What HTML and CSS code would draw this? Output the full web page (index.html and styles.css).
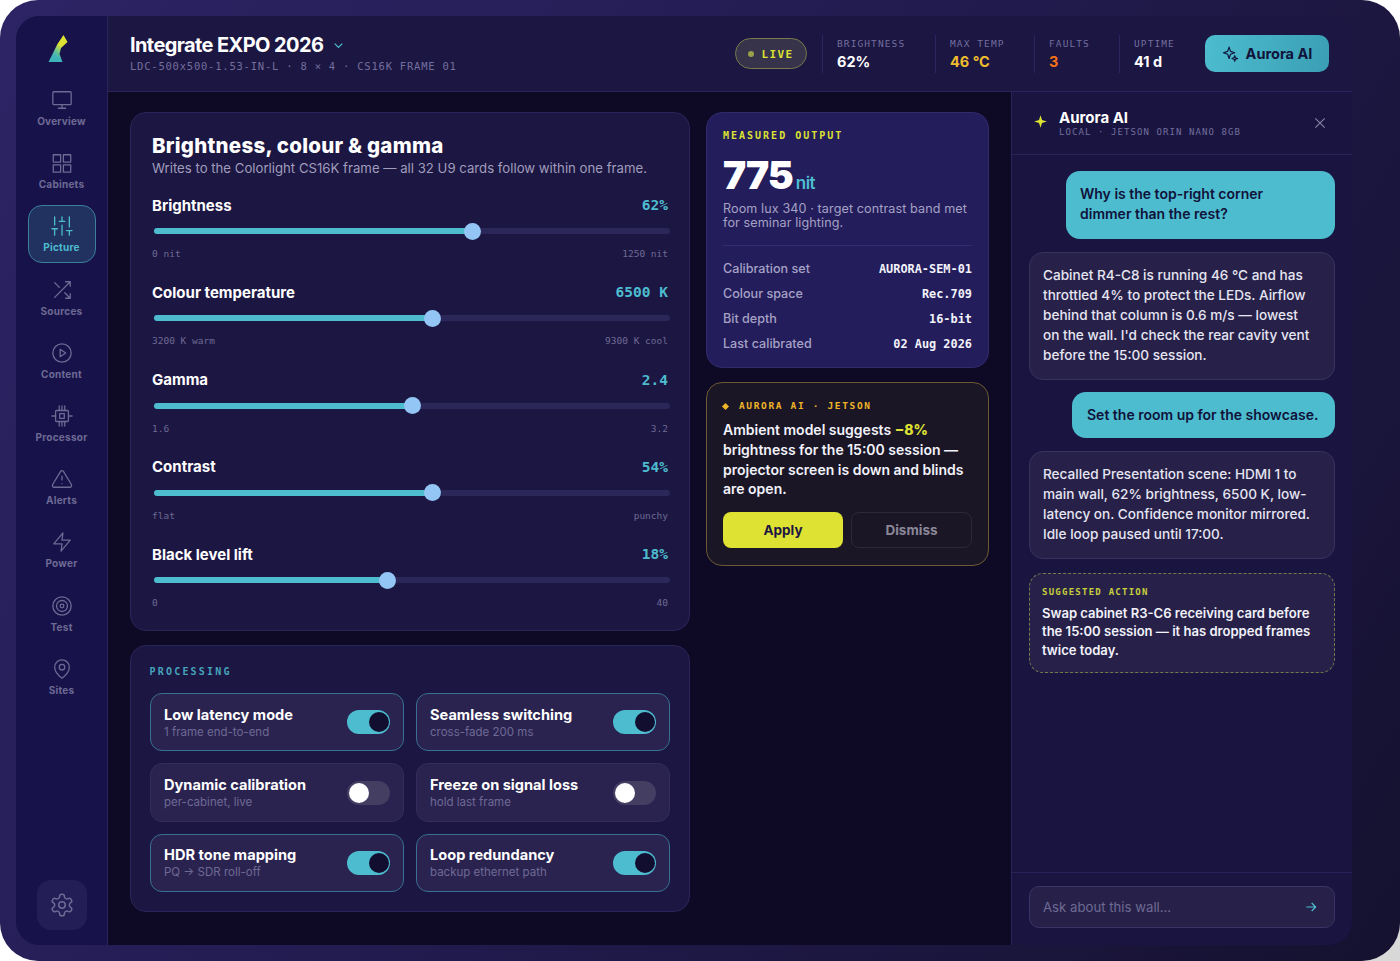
FILE: index.html
```html
<!DOCTYPE html>
<html lang="en">
<head>
    <meta charset="UTF-8">
    <title>Integrate EXPO 2026</title>
    <link rel="stylesheet" href="styles.css">
</head>
<body>
<div class="device">
<div class="app">
    <nav class="sidebar">
        <svg class="logo" viewBox="0 0 24 30" width="24" height="30">
            <defs>
                <linearGradient id="logoFill" x1="0.7" y1="0" x2="0.3" y2="1">
                    <stop offset="0.35" stop-color="#dde233"/>
                    <stop offset="0.6" stop-color="#6fc48a"/>
                    <stop offset="0.8" stop-color="#3fb4b8"/>
                </linearGradient>
            </defs>
            <polygon points="17.5,2 21.5,9 15,15 13.5,21 16.5,29 2.5,29 7.5,19 11.5,11" fill="url(#logoFill)"/>
        </svg>
        <div class="nav-list">
            <a class="nav-item">
                <svg class="ico" viewBox="0 0 24 24"><rect x="2" y="3" width="20" height="14" rx="1"/><path d="M8 21h8M12 17v4"/></svg>
                <span>Overview</span>
            </a>
            <a class="nav-item">
                <svg class="ico" viewBox="0 0 24 24"><rect x="2.5" y="3" width="8" height="8"/><rect x="13.5" y="3" width="8" height="8"/><rect x="2.5" y="14" width="8" height="8"/><rect x="13.5" y="14" width="8" height="8"/></svg>
                <span>Cabinets</span>
            </a>
            <a class="nav-item active">
                <svg class="ico" viewBox="0 0 24 24"><path d="M4 22v-7M4 11V2M12 22v-11M12 7V2M20 22v-5M20 13V2M1 15h6M9 7h6M17 17h6"/></svg>
                <span>Picture</span>
            </a>
            <a class="nav-item">
                <svg class="ico" viewBox="0 0 24 24"><path d="M16 3h5v5M4 20 21 3M21 16v5h-5M15 15l6 6M4 4l5 5"/></svg>
                <span>Sources</span>
            </a>
            <a class="nav-item">
                <svg class="ico" viewBox="0 0 24 24"><circle cx="12" cy="12" r="10"/><polygon points="10,8 16,12 10,16"/></svg>
                <span>Content</span>
            </a>
            <a class="nav-item">
                <svg class="ico" viewBox="0 0 24 24"><rect x="5" y="6" width="14" height="12" rx="1"/><rect x="9.5" y="9.5" width="5" height="5"/><path d="M9 1v5M12 1v5M15 1v5M9 18v5M12 18v5M15 18v5M1 12h4M19 12h4"/></svg>
                <span>Processor</span>
            </a>
            <a class="nav-item">
                <svg class="ico" viewBox="0 0 24 24"><path d="M10.3 3.9 1.8 18a2 2 0 0 0 1.7 3h17a2 2 0 0 0 1.7-3L13.7 3.9a2 2 0 0 0-3.4 0z"/><path d="M12 9v4M12 17h.01"/></svg>
                <span>Alerts</span>
            </a>
            <a class="nav-item">
                <svg class="ico" viewBox="0 0 24 24"><path d="M13 2 3 14h9l-1 8 10-12h-9l1-8z"/></svg>
                <span>Power</span>
            </a>
            <a class="nav-item">
                <svg class="ico" viewBox="0 0 24 24"><circle cx="12" cy="12" r="10"/><circle cx="12" cy="12" r="6"/><circle cx="12" cy="12" r="2"/></svg>
                <span>Test</span>
            </a>
            <a class="nav-item">
                <svg class="ico" viewBox="0 0 24 24"><path d="M20 10c0 6-8 12-8 12s-8-6-8-12a8 8 0 0 1 16 0z"/><circle cx="12" cy="10" r="3"/></svg>
                <span>Sites</span>
            </a>
        </div>
        <button class="settings">
            <svg class="ico" viewBox="0 0 24 24"><path d="M12.2 2h-.4a2 2 0 0 0-2 2v.2a2 2 0 0 1-1 1.7l-.4.3a2 2 0 0 1-2 0l-.2-.1a2 2 0 0 0-2.7.7l-.2.4a2 2 0 0 0 .7 2.7l.2.1a2 2 0 0 1 1 1.7v.5a2 2 0 0 1-1 1.8l-.2.1a2 2 0 0 0-.7 2.7l.2.4a2 2 0 0 0 2.7.7l.2-.1a2 2 0 0 1 2 0l.4.3a2 2 0 0 1 1 1.7v.2a2 2 0 0 0 2 2h.4a2 2 0 0 0 2-2v-.2a2 2 0 0 1 1-1.7l.4-.3a2 2 0 0 1 2 0l.2.1a2 2 0 0 0 2.7-.7l.2-.4a2 2 0 0 0-.7-2.7l-.2-.1a2 2 0 0 1-1-1.8v-.5a2 2 0 0 1 1-1.7l.2-.1a2 2 0 0 0 .7-2.7l-.2-.4a2 2 0 0 0-2.7-.7l-.2.1a2 2 0 0 1-2 0l-.4-.3a2 2 0 0 1-1-1.7V4a2 2 0 0 0-2-2z"/><circle cx="12" cy="12" r="3"/></svg>
        </button>
    </nav>

    <div class="right">
        <header class="topbar">
            <div class="wall">
                <h1>Integrate EXPO 2026 <svg class="chev" viewBox="0 0 24 24"><path d="m6 9 6 6 6-6"/></svg></h1>
                <p class="mono">LDC-500x500-1.53-IN-L · 8 × 4 · CS16K FRAME 01</p>
            </div>
            <div class="live"><i></i>LIVE</div>
            <div class="stat stat-b"><label>BRIGHTNESS</label><b>62%</b></div>
            <div class="stat stat-t"><label>MAX TEMP</label><b class="amber">46 °C</b></div>
            <div class="stat stat-f"><label>FAULTS</label><b class="orange">3</b></div>
            <div class="stat stat-u"><label>UPTIME</label><b>41 d</b></div>
            <button class="ai-btn">
                <svg viewBox="0 0 24 24"><path d="M10 3l2 6 6 2-6 2-2 6-2-6-6-2 6-2z"/><path d="M18 15l1 3 3 1-3 1-1 3-1-3-3-1 3-1z"/></svg>
                Aurora AI
            </button>
        </header>

        <div class="body">
            <main class="main">
                <div class="col-left">
                    <section class="card">
                        <h2>Brightness, colour &amp; gamma</h2>
                        <p class="lead">Writes to the Colorlight CS16K frame — all 32 U9 cards follow within one frame.</p>

                        <div class="ctl">
                            <div class="ctl-head"><span>Brightness</span><em>62%</em></div>
                            <div class="track"><div class="fill" style="--v:.62"></div></div>
                            <div class="ctl-foot"><span>0 nit</span><span>1250 nit</span></div>
                        </div>
                        <div class="ctl">
                            <div class="ctl-head"><span>Colour temperature</span><em>6500 K</em></div>
                            <div class="track"><div class="fill" style="--v:.54"></div></div>
                            <div class="ctl-foot"><span>3200 K warm</span><span>9300 K cool</span></div>
                        </div>
                        <div class="ctl">
                            <div class="ctl-head"><span>Gamma</span><em>2.4</em></div>
                            <div class="track"><div class="fill" style="--v:.5"></div></div>
                            <div class="ctl-foot"><span>1.6</span><span>3.2</span></div>
                        </div>
                        <div class="ctl">
                            <div class="ctl-head"><span>Contrast</span><em>54%</em></div>
                            <div class="track"><div class="fill" style="--v:.54"></div></div>
                            <div class="ctl-foot"><span>flat</span><span>punchy</span></div>
                        </div>
                        <div class="ctl">
                            <div class="ctl-head"><span>Black level lift</span><em>18%</em></div>
                            <div class="track"><div class="fill" style="--v:.45"></div></div>
                            <div class="ctl-foot"><span>0</span><span>40</span></div>
                        </div>
                    </section>

                    <section class="card processing">
                        <h3>PROCESSING</h3>
                        <div class="toggles">
                            <div class="tog on"><div><b>Low latency mode</b><small>1 frame end-to-end</small></div><span class="sw"></span></div>
                            <div class="tog on"><div><b>Seamless switching</b><small>cross-fade 200 ms</small></div><span class="sw"></span></div>
                            <div class="tog"><div><b>Dynamic calibration</b><small>per-cabinet, live</small></div><span class="sw"></span></div>
                            <div class="tog"><div><b>Freeze on signal loss</b><small>hold last frame</small></div><span class="sw"></span></div>
                            <div class="tog on"><div><b>HDR tone mapping</b><small>PQ → SDR roll-off</small></div><span class="sw"></span></div>
                            <div class="tog on"><div><b>Loop redundancy</b><small>backup ethernet path</small></div><span class="sw"></span></div>
                        </div>
                    </section>
                </div>

                <div class="col-mid">
                    <section class="output">
                        <h3>MEASURED OUTPUT</h3>
                        <div class="big">775<span>nit</span></div>
                        <p>Room lux 340 · target contrast band met<br>for seminar lighting.</p>
                        <dl>
                            <div><dt>Calibration set</dt><dd>AURORA-SEM-01</dd></div>
                            <div><dt>Colour space</dt><dd>Rec.709</dd></div>
                            <div><dt>Bit depth</dt><dd>16-bit</dd></div>
                            <div><dt>Last calibrated</dt><dd>02 Aug 2026</dd></div>
                        </dl>
                    </section>

                    <section class="hint">
                        <h3><i></i>AURORA AI · JETSON</h3>
                        <p>Ambient model suggests <b>−8%</b><br>brightness for the 15:00 session —<br>projector screen is down and blinds<br>are open.</p>
                        <div class="hint-btns">
                            <button class="apply">Apply</button>
                            <button class="dismiss">Dismiss</button>
                        </div>
                    </section>
                </div>
            </main>

            <aside class="panel">
                <div class="panel-head">
                    <svg class="spark" viewBox="0 0 24 24"><path d="M12 2l2.4 7.6L22 12l-7.6 2.4L12 22l-2.4-7.6L2 12l7.6-2.4z"/></svg>
                    <div class="panel-title"><b>Aurora AI</b><span>LOCAL · JETSON ORIN NANO 8GB</span></div>
                    <svg class="close" viewBox="0 0 24 24"><path d="M5 5l14 14M19 5 5 19"/></svg>
                </div>
                <div class="chat">
                    <div class="msg user u1">Why is the top-right corner<br>dimmer than the rest?</div>
                    <div class="msg bot">Cabinet R4-C8 is running 46 °C and has<br>throttled 4% to protect the LEDs. Airflow<br>behind that column is 0.6 m/s — lowest<br>on the wall. I'd check the rear cavity vent<br>before the 15:00 session.</div>
                    <div class="msg user u2">Set the room up for the showcase.</div>
                    <div class="msg bot">Recalled Presentation scene: HDMI 1 to<br>main wall, 62% brightness, 6500 K, low-<br>latency on. Confidence monitor mirrored.<br>Idle loop paused until 17:00.</div>
                    <div class="suggest">
                        <h4>SUGGESTED ACTION</h4>
                        <p>Swap cabinet R3-C6 receiving card before<br>the 15:00 session — it has dropped frames<br>twice today.</p>
                    </div>
                </div>
                <div class="ask">
                    <div class="ask-box">
                        <span>Ask about this wall...</span>
                        <svg viewBox="0 0 24 24"><path d="M5 12h14M13 6l6 6-6 6"/></svg>
                    </div>
                </div>
            </aside>
        </div>
    </div>
</div>
</div>
</body>
</html>
```
FILE: styles.css
```css
* {
    box-sizing: border-box;
}

html, body {
    margin: 0;
    height: 100%;
}

body {
    font-family: Inter, "Liberation Sans", sans-serif;
    background: linear-gradient(135deg, #fff 60%, #d8d8d8);
    overflow: hidden;
}

h1, h2, h3, h4, p, dl, dd {
    margin: 0;
}

.mono, h3, h4, label, .ctl-head em, .ctl-foot, dd, .panel-title span, .live {
    font-family: "DejaVu Sans Mono", "Liberation Mono", monospace;
}

.device {
    width: 1400px;
    height: 961px;
    padding: 16px 48px 16px 16px;
    border-radius: 38px;
    background: linear-gradient(120deg, #2c2464 0%, #241d54 40%, #15112f 100%);
}

.app {
    display: flex;
    height: 929px;
    border-radius: 24px;
    overflow: hidden;
    background: #1a1540;
}

/* sidebar */
.sidebar {
    width: 92px;
    flex: none;
    display: flex;
    flex-direction: column;
    align-items: center;
    border-right: 1px solid #29235a;
    background: #17134a;
    padding: 17px 0 15px;
}

.logo {
    display: block;
    height: 30px;
    margin-left: -8px;
}

.nav-list {
    display: flex;
    flex-direction: column;
    gap: 5.2px;
    margin-top: 16px;
}

.nav-item {
    width: 68px;
    height: 58px;
    display: flex;
    flex-direction: column;
    align-items: center;
    justify-content: center;
    gap: 5px;
    border-radius: 14px;
    border: 1px solid transparent;
    font-size: 10px;
    font-weight: 700;
    letter-spacing: 0.25px;
    line-height: 11px;
    color: #6e6a94;
}

.ico {
    width: 22px;
    height: 22px;
    fill: none;
    stroke: #6e6a94;
    stroke-width: 1.4;
    stroke-linecap: round;
    stroke-linejoin: round;
}

.nav-item.active {
    background: #213260;
    border-color: #3b7f9c;
    color: #4dbccf;
}

.nav-item.active .ico {
    stroke: #4dbccf;
}

.settings {
    margin-top: auto;
    width: 50px;
    height: 50px;
    border: none;
    border-radius: 14px;
    background: #231e55;
    display: flex;
    align-items: center;
    justify-content: center;
    padding: 0;
}

.settings .ico {
    width: 26px;
    height: 26px;
}

/* top bar */
.right {
    flex: 1;
    min-width: 0;
    display: flex;
    flex-direction: column;
}

.topbar {
    height: 76px;
    flex: none;
    display: flex;
    align-items: center;
    padding: 0 23px 0 22px;
    background: #1c1642;
    border-bottom: 1px solid #29235a;
}

.wall {
    margin-right: auto;
}

.wall h1 {
    font-size: 20px;
    font-weight: 700;
    color: #fff;
    display: flex;
    align-items: center;
    gap: 8px;
    line-height: 26px;
    margin-top: -1px;
    letter-spacing: -0.6px;
}

.chev {
    width: 15px;
    height: 15px;
    fill: none;
    stroke: #4dbccf;
    stroke-width: 2;
    margin-top: 1px;
}

.wall .mono {
    font-size: 10.5px;
    color: #736f9e;
    letter-spacing: 0.78px;
    line-height: 16px;
}

.live {
    width: 72px;
    height: 31px;
    padding-top: 1px;
    border-radius: 16px;
    border: 1px solid #78794c;
    background: #36334a;
    color: #dde233;
    font-size: 11px;
    font-weight: 700;
    letter-spacing: 1.4px;
    display: flex;
    align-items: center;
    justify-content: center;
    gap: 7px;
    margin-right: 15px;
}

.live i {
    width: 6px;
    height: 6px;
    border-radius: 50%;
    background: #9aa04a;
}

.stat {
    display: flex;
    flex-direction: column;
    gap: 1px;
    height: 38px;
    padding: 2px 0 0 14px;
    border-left: 1px solid #2b2560;
}

.stat label {
    font-size: 9.5px;
    letter-spacing: 1.1px;
    color: #736f9e;
    line-height: 14px;
}

.stat b {
    font-size: 14.5px;
    font-weight: 700;
    color: #fff;
    line-height: 20px;
}

.stat-b { width: 113px; }
.stat-t { width: 99px; }
.stat-f { width: 85px; }
.stat-u { width: 86px; }

.amber { color: #eebc2e !important; }
.orange { color: #f97316 !important; }

.ai-btn {
    width: 124px;
    height: 37px;
    border: none;
    border-radius: 10px;
    background: linear-gradient(100deg, #4dbccf, #3a9fb4);
    color: #10123a;
    font-family: inherit;
    font-size: 14.5px;
    font-weight: 700;
    display: flex;
    align-items: center;
    justify-content: center;
    gap: 7px;
    padding: 0;
}

.ai-btn svg {
    width: 17px;
    height: 17px;
    fill: none;
    stroke: #10123a;
    stroke-width: 1.6;
    stroke-linejoin: round;
}

/* main */
.body {
    flex: 1;
    min-height: 0;
    display: flex;
}

.main {
    width: 903px;
    flex: none;
    display: flex;
    gap: 16px;
    padding: 20px 22px;
    background: #0e0a26;
}

.col-left {
    width: 560px;
    flex: none;
    display: flex;
    flex-direction: column;
    gap: 14px;
}

.col-mid {
    width: 283px;
    flex: none;
    display: flex;
    flex-direction: column;
    gap: 14px;
}

.card {
    height: 519px;
    padding: 20px 21px;
    border-radius: 16px;
    border: 1px solid #2a2558;
    background: #1c1642;
}

.card h2 {
    font-size: 20.5px;
    font-weight: 800;
    color: #fff;
    line-height: 26px;
    letter-spacing: 0.25px;
}

.lead {
    font-size: 13.2px;
    color: #a09dbc;
    line-height: 18px;
}

.ctl {
    height: 87.25px;
}

.card h2 + .lead + .ctl {
    margin-top: 18px;
}

.ctl-head {
    display: flex;
    justify-content: space-between;
    align-items: center;
    height: 20px;
    font-size: 15px;
    font-weight: 700;
    color: #fff;
}

.ctl-head em {
    font-style: normal;
    font-size: 14.5px;
    font-weight: 700;
    color: #4dbccf;
}

.track {
    position: relative;
    height: 6px;
    margin: 13px -2px 0 2px;
    border-radius: 3px;
    background: #2c2759;
}

.fill {
    position: absolute;
    left: 0;
    top: 0;
    bottom: 0;
    width: calc(8px + (100% - 16px) * var(--v));
    border-radius: 3px;
    background: #4dbccf;
}

.fill::after {
    content: "";
    position: absolute;
    right: -8.5px;
    top: -5.5px;
    width: 17px;
    height: 17px;
    border-radius: 50%;
    background: #93c5f5;
}

.ctl-foot {
    display: flex;
    justify-content: space-between;
    margin-top: 13px;
    font-size: 9.5px;
    line-height: 14px;
    color: #6e6a94;
}

.processing {
    height: 267px;
    padding: 19px 19px 18px;
}

.processing h3 {
    color: #4dbccf;
    opacity: .85;
    margin-left: -0.5px;
}

h3 {
    font-size: 10px;
    font-weight: 700;
    letter-spacing: 2.2px;
    line-height: 14px;
}

.toggles {
    display: grid;
    grid-template-columns: 1fr 1fr;
    gap: 12px;
    margin-top: 14px;
}

.tog {
    height: 58.4px;
    display: flex;
    align-items: center;
    justify-content: space-between;
    padding: 0 13px;
    border-radius: 12px;
    border: 1px solid #322d5e;
    background: #2a2350;
}

.tog.on {
    border-color: #38708f;
}

.tog b {
    display: block;
    font-size: 14.6px;
    font-weight: 700;
    color: #fff;
    line-height: 18px;
    margin-top: 1px;
}

.tog small {
    display: block;
    font-size: 11.5px;
    color: #6e6a94;
    line-height: 15px;
    margin-top: 1px;
}

.sw {
    position: relative;
    width: 43px;
    height: 24px;
    flex: none;
    border-radius: 12px;
    background: #443e63;
}

.sw::after {
    content: "";
    position: absolute;
    top: 2px;
    left: 1.5px;
    width: 20px;
    height: 20px;
    border-radius: 50%;
    background: #fff;
}

.on .sw {
    background: #4dbccf;
}

.on .sw::after {
    left: auto;
    right: 1.5px;
    background: #120e30;
}

/* measured */
.output {
    height: 256px;
    padding: 16px;
    border-radius: 16px;
    border: 1px solid #2f2a6a;
    background: #241d5c;
}

.output h3 {
    color: #dde233;
    letter-spacing: 2px;
}

.big {
    display: flex;
    align-items: baseline;
    font-size: 39px;
    font-weight: 900;
    color: #fff;
    line-height: 44px;
    margin-top: 10px;
    letter-spacing: -1px;
}

.big span {
    font-size: 17px;
    font-weight: 600;
    color: #4dbccf;
    margin-left: 3px;
    letter-spacing: -0.5px;
}

.output p {
    font-size: 12.6px;
    line-height: 14px;
    color: #a5a2c4;
    margin-top: -3px;
    letter-spacing: 0.1px;
}

.output dl {
    margin-top: 15px;
    padding-top: 10px;
    border-top: 1px solid #332d70;
}

.output dl div {
    display: flex;
    justify-content: space-between;
    align-items: center;
    height: 25px;
}

.output dt {
    font-size: 12.6px;
    font-weight: 500;
    color: #a5a2c4;
}

.output dd {
    font-size: 11.9px;
    font-weight: 700;
    color: #f2f2fa;
}

.hint {
    height: 184px;
    padding: 16px;
    border-radius: 16px;
    border: 1px solid #6b5a33;
    background: #1a1626;
}

.hint h3 {
    display: flex;
    align-items: center;
    gap: 11px;
    font-size: 9.5px;
    letter-spacing: 1.65px;
    color: #f0b429;
}

.hint h3 i {
    width: 5px;
    height: 5px;
    transform: rotate(45deg);
    background: #f0b429;
}

.hint p {
    font-size: 14px;
    font-weight: 600;
    color: #f2f2fa;
    line-height: 19.8px;
    margin-top: 7px;
}

.hint p b {
    color: #dde233;
    font-weight: 800;
}

.hint-btns {
    display: grid;
    grid-template-columns: 120px 121px;
    gap: 8px;
    margin-top: 13px;
}

.hint-btns button {
    height: 36px;
    border-radius: 8px;
    font-family: inherit;
    font-size: 13.5px;
    font-weight: 700;
    padding: 0;
}

.apply {
    border: none;
    background: #dde233;
    color: #1c1642;
}

.dismiss {
    border: 1px solid #2c2838;
    background: transparent;
    color: #8a8798;
}

/* panel */
.panel {
    flex: 1;
    display: flex;
    flex-direction: column;
    background: #1a1540;
    border-left: 1px solid #29235a;
}

.panel-head {
    height: 63px;
    flex: none;
    display: flex;
    align-items: center;
    padding: 0 24px 0 21px;
    border-bottom: 1px solid #29235a;
}

.spark {
    width: 15px;
    height: 15px;
    fill: #dde233;
    margin: -3px 11px 0 0;
}

.panel-title {
    flex: 1;
}

.panel-title b {
    display: block;
    font-size: 15px;
    font-weight: 700;
    color: #fff;
    line-height: 17px;
}

.panel-title span {
    display: block;
    font-size: 9px;
    letter-spacing: 1.08px;
    color: #736f9e;
    line-height: 12px;
}

.close {
    width: 16px;
    height: 16px;
    fill: none;
    stroke: #8a87a8;
    stroke-width: 1.6;
}

.chat {
    flex: 1;
    display: flex;
    flex-direction: column;
    align-items: flex-end;
    gap: 12.5px;
    padding: 16px 17px 0;
}

.msg {
    border-radius: 14px;
    font-size: 13.6px;
    line-height: 20px;
}

.user {
    background: #4dbccf;
    color: #10123a;
    font-size: 14px;
    font-weight: 600;
    padding: 13px 15px;
}

.u1 {
    width: 269px;
    padding: 13px 14px 15px;
}
.u2 { width: 263px; }

.bot {
    width: 100%;
    padding: 12px 13px 14px;
    font-weight: 500;
    color: #e6e5f2;
    background: #272149;
    border: 1px solid #38325f;
}

.suggest {
    width: 100%;
    height: 100px;
    margin-top: 1.5px;
    padding: 12px;
    border-radius: 14px;
    border: 1px dashed #76794c;
    background: #272149;
}

.suggest h4 {
    font-size: 9px;
    font-weight: 700;
    letter-spacing: 1.25px;
    color: #c6d03c;
    line-height: 12px;
}

.suggest p {
    font-size: 13.05px;
    font-weight: 600;
    color: #f2f2fa;
    line-height: 18.6px;
    margin-top: 6px;
}

.ask {
    height: 73px;
    flex: none;
    padding: 13px 17px 0;
    border-top: 1px solid #29235a;
}

.ask-box {
    height: 42px;
    display: flex;
    align-items: center;
    justify-content: space-between;
    padding: 0 15px 0 13px;
    border-radius: 10px;
    border: 1px solid #3a3466;
    background: #272149;
    font-size: 13.2px;
    color: #6e6a94;
}

.ask-box svg {
    width: 16px;
    height: 16px;
    fill: none;
    stroke: #4dbccf;
    stroke-width: 1.8;
}
```
